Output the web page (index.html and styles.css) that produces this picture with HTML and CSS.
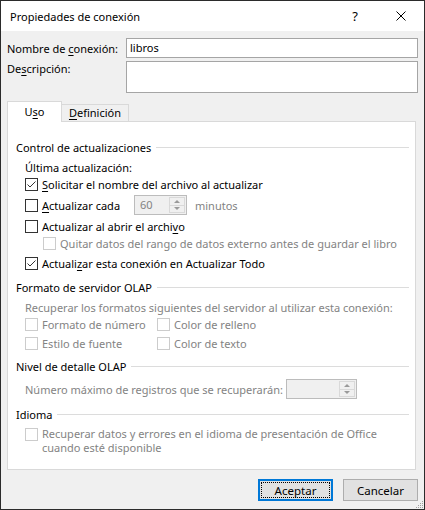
FILE: index.html
```html
<!DOCTYPE html>
<html lang="es">
<head>
<meta charset="utf-8">
<title>Propiedades de conexión</title>
<link rel="stylesheet" href="styles.css">
</head>
<body>
<div class="window">
  <div class="titlebar">
    <span class="title">Propiedades de conexión</span>
    <span class="caption-btn help">?</span>
    <span class="caption-btn close">
      <svg width="10" height="10" viewBox="0 0 10 10"><path d="M0.5 0.5 L9.5 9.5 M9.5 0.5 L0.5 9.5" stroke="#000" stroke-width="1" fill="none"/></svg>
    </span>
  </div>
  <div class="body">
    <div class="field-row">
      <span class="field-label">Nombre de <u>c</u>onexión:</span>
      <div class="input">libros</div>
    </div>
    <div class="field-row desc">
      <span class="field-label">De<u>s</u>cripción:</span>
      <div class="textarea"></div>
    </div>
    <div class="tabs">
      <div class="tab active">U<u>s</u>o</div>
      <div class="tab"><u>D</u>efinición</div>
    </div>
    <div class="panel">
      <div class="sec-head"><span>Control de actualizaciones</span><span class="rule"></span></div>
      <div class="row indent mt4">Última actualización:</div>
      <div class="row indent mt1">
        <span class="cb"><svg width="11" height="11" viewBox="0 0 11 11"><path d="M1.5 5.5 L4 8 L9.5 2.5" stroke="#333" stroke-width="1" fill="none"/></svg></span>
        <span><u>S</u>olicitar el nombre del archivo al actualizar</span>
      </div>
      <div class="row tall indent mt3">
        <span class="cb"></span>
        <span class="every-label"><u>A</u>ctualizar cada</span>
        <div class="spin small">
          <span class="spin-value">60</span>
          <span class="spin-btns"><span class="spin-btn"><i class="tri up"></i></span><span class="spin-btn"><i class="tri down"></i></span></span>
        </div>
        <span class="muted minutes">minutos</span>
      </div>
      <div class="row indent mt3">
        <span class="cb"></span>
        <span>Actualizar al abrir el archi<u>v</u>o</span>
      </div>
      <div class="row indent2 mt1">
        <span class="cb disabled"></span>
        <span class="muted">Quitar datos del rango de datos externo antes de guardar el libro</span>
      </div>
      <div class="row indent mt4">
        <span class="cb"><svg width="11" height="11" viewBox="0 0 11 11"><path d="M1.5 5.5 L4 8 L9.5 2.5" stroke="#333" stroke-width="1" fill="none"/></svg></span>
        <span>Actuali<u>z</u>ar esta conexión en Actualizar Todo</span>
      </div>

      <div class="sec-head mt8"><span>Formato de servidor OLAP</span><span class="rule"></span></div>
      <div class="row indent muted mt4">Recuperar los formatos siguientes del servidor al utilizar esta conexión:</div>
      <div class="row indent mt1">
        <span class="col"><span class="cb disabled"></span><span class="muted">Formato de número</span></span>
        <span class="col"><span class="cb disabled"></span><span class="muted">Color de relleno</span></span>
      </div>
      <div class="row indent mt3">
        <span class="col"><span class="cb disabled"></span><span class="muted">Estilo de fuente</span></span>
        <span class="col"><span class="cb disabled"></span><span class="muted">Color de texto</span></span>
      </div>

      <div class="sec-head mt7"><span>Nivel de detalle OLAP</span><span class="rule"></span></div>
      <div class="row tall indent mt5">
        <span class="muted max-label">Número máximo de registros que se recuperarán:</span>
        <div class="spin wide">
          <span class="spin-value"></span>
          <span class="spin-btns"><span class="spin-btn"><i class="tri up"></i></span><span class="spin-btn"><i class="tri down"></i></span></span>
        </div>
      </div>

      <div class="sec-head mt7"><span>Idioma</span><span class="rule"></span></div>
      <div class="row multi indent mt5">
        <span class="cb disabled"></span>
        <span class="muted">Recuperar datos y errores en el idioma de presentación de Office<br>cuando esté disponible</span>
      </div>
    </div>
    <div class="buttons">
      <button class="btn default"><span>Aceptar</span></button>
      <button class="btn">Cancelar</button>
    </div>
  </div>
  <svg class="grip" width="10" height="10" viewBox="0 0 10 10">
    <rect x="8" y="2" width="1" height="1" fill="#a0a0a0"/>
    <rect x="6" y="4" width="1" height="1" fill="#a0a0a0"/>
    <rect x="8" y="4" width="1" height="1" fill="#a0a0a0"/>
    <rect x="4" y="6" width="1" height="1" fill="#a0a0a0"/>
    <rect x="6" y="6" width="1" height="1" fill="#a0a0a0"/>
    <rect x="8" y="6" width="1" height="1" fill="#a0a0a0"/>
    <rect x="2" y="8" width="1" height="1" fill="#a0a0a0"/>
    <rect x="4" y="8" width="1" height="1" fill="#a0a0a0"/>
    <rect x="6" y="8" width="1" height="1" fill="#a0a0a0"/>
    <rect x="8" y="8" width="1" height="1" fill="#a0a0a0"/>
  </svg>
</div>
</body>
</html>
```
FILE: styles.css
```css
* { box-sizing: border-box; }
html, body { margin: 0; padding: 0; }
body {
  font-family: "Noto Sans", "Open Sans", sans-serif;
  font-size: 11px;
  color: #000;
  background: #f0f0f0;
}
u { text-decoration: underline; text-underline-offset: 2px; }

.window {
  position: relative;
  width: 425px;
  height: 510px;
  border: 1px solid #2b2b2b;
  background: #f0f0f0;
  display: flex;
  flex-direction: column;
}

.titlebar {
  height: 30px;
  background: #fff;
  display: flex;
  align-items: center;
  padding-left: 9px;
  flex: none;
}
.title { flex: 1; font-size: 11px; }
.caption-btn {
  width: 46px;
  height: 30px;
  display: flex;
  align-items: center;
  justify-content: center;
}
.help { font-size: 13px; }

.body {
  flex: 1;
  padding: 7px 6px 8px 6px;
  display: flex;
  flex-direction: column;
}

.field-row {
  display: flex;
  align-items: center;
  height: 20px;
}
.field-row.desc {
  align-items: flex-start;
  height: 32px;
  margin-top: 3px;
}
.field-label { width: 119px; flex: none; }
.desc .field-label { line-height: 15px; }
.input {
  flex: 1;
  height: 20px;
  border: 1px solid #a5a5a5;
  background: #fff;
  padding-left: 3px;
  line-height: 18px;
}
.textarea {
  flex: 1;
  height: 32px;
  border: 1px solid #a5a5a5;
  background: #fff;
}

.tabs {
  margin-top: 8px;
  display: flex;
  align-items: flex-end;
  height: 20px;
}
.tab {
  height: 17px;
  width: 67px;
  border: 1px solid #d9d9d9;
  border-left: none;
  border-bottom: none;
  background: #f0f0f0;
  text-align: center;
  line-height: 16px;
}
.tab.active {
  width: 55px;
  height: 21px;
  margin-bottom: -1px;
  border-left: 1px solid #d9d9d9;
  background: #fff;
  position: relative;
  z-index: 1;
  line-height: 20px;
}

.panel {
  width: 409px;
  height: 349px;
  background: #fff;
  border: 1px solid #d9d9d9;
  padding: 17px 6px 0 8px;
  display: flex;
  flex-direction: column;
}

.sec-head {
  height: 16px;
  display: flex;
  align-items: center;
  gap: 5px;
}
.rule { flex: 1; height: 1px; background: #dcdcdc; }

.row {
  height: 16px;
  display: flex;
  align-items: center;
  white-space: nowrap;
}
.row.tall { height: 20px; }
.row.multi {
  height: auto;
  align-items: flex-start;
  line-height: 14px;
}
.row.multi .cb { margin-top: 1px; }
.indent { padding-left: 9px; }
.indent2 { padding-left: 27px; }

.mt1 { margin-top: 1px; }
.mt3 { margin-top: 3px; }
.mt4 { margin-top: 4px; }
.mt5 { margin-top: 5px; }
.mt7 { margin-top: 7px; }
.mt8 { margin-top: 8px; }

.muted { color: #838383; }

.cb {
  width: 13px;
  height: 13px;
  flex: none;
  border: 1px solid #333;
  background: #fff;
  margin-right: 4px;
  display: flex;
  align-items: center;
  justify-content: center;
}
.cb.disabled { border-color: #cccccc; }

.col { display: flex; align-items: center; width: 132px; }

.every-label { width: 92px; }
.minutes { margin-left: 8px; }
.max-label { width: 261px; }

.spin {
  height: 20px;
  display: flex;
  border: 1px solid #bcbcbc;
  background: #f0f0f0;
}
.spin.small { width: 53px; }
.spin.wide { width: 71px; }
.spin-value {
  flex: 1;
  color: #838383;
  padding-left: 5px;
  line-height: 18px;
}
.spin-btns {
  width: 17px;
  display: flex;
  flex-direction: column;
  padding: 1px 1px 1px 0;
}
.spin-btn {
  flex: 1;
  border: 1px solid #d9d9d9;
  display: flex;
  align-items: center;
  justify-content: center;
}
.spin-btn + .spin-btn { border-top: none; }
.tri {
  width: 0;
  height: 0;
  border-left: 3px solid transparent;
  border-right: 3px solid transparent;
}
.tri.up { border-bottom: 3px solid #9a9a9a; }
.tri.down { border-top: 3px solid #9a9a9a; }

.buttons {
  margin-top: 9px;
  display: flex;
  justify-content: flex-end;
  gap: 10px;
}
.btn {
  width: 75px;
  height: 22px;
  border: 1px solid #adadad;
  background: #e1e1e1;
  font-family: inherit;
  font-size: 11.5px;
  color: #000;
  padding: 0;
}
.btn.default {
  border: 2px solid #0078d7;
  outline: 1px dotted #000;
  outline-offset: -4px;
}

.grip {
  position: absolute;
  right: 0;
  bottom: 0;
}
```
